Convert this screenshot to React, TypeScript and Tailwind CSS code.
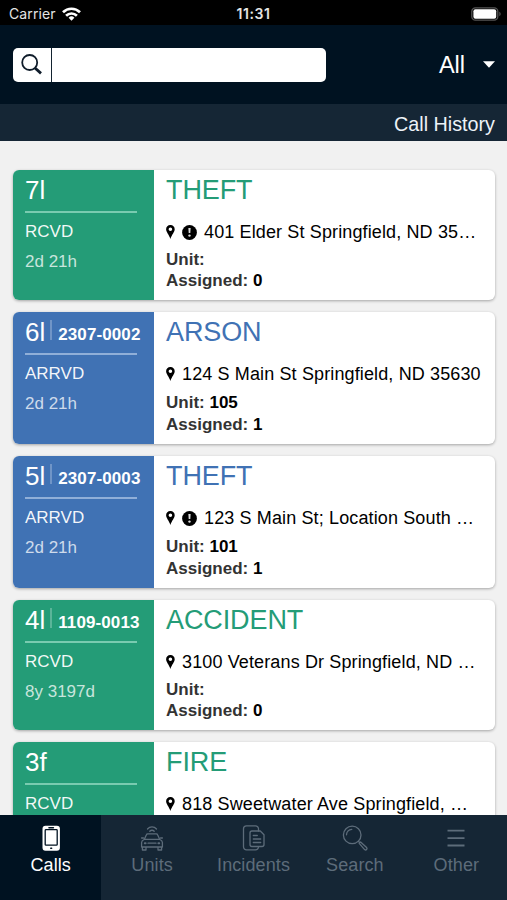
import type { ReactNode } from "react";
import clsx from "clsx";

type Call = {
  id: string;
  caseNo?: string;
  status: string;
  age?: string;
  type: string;
  alert?: boolean;
  address: string;
  unit?: string;
  assigned?: number;
  tone: "green" | "blue";
};

const calls: Call[] = [
  { id: "7l", status: "RCVD", age: "2d 21h", type: "THEFT", alert: true, address: "401 Elder St Springfield, ND 35…", assigned: 0, tone: "green" },
  { id: "6l", caseNo: "2307-0002", status: "ARRVD", age: "2d 21h", type: "ARSON", address: "124 S Main St Springfield, ND 35630", unit: "105", assigned: 1, tone: "blue" },
  { id: "5l", caseNo: "2307-0003", status: "ARRVD", age: "2d 21h", type: "THEFT", alert: true, address: "123 S Main St; Location South …", unit: "101", assigned: 1, tone: "blue" },
  { id: "4l", caseNo: "1109-0013", status: "RCVD", age: "8y 3197d", type: "ACCIDENT", address: "3100 Veterans Dr Springfield, ND …", assigned: 0, tone: "green" },
  { id: "3f", status: "RCVD", type: "FIRE", address: "818 Sweetwater Ave Springfield, …", tone: "green" },
];

function PinIcon() {
  return (
    <svg className="w-[9px] h-3.5 shrink-0" viewBox="0 0 9 14">
      <path fillRule="evenodd" d="M4.4 0A4.2 4.2 0 0 0 .1 4.3C.1 7 2.9 9.4 4.4 14c1.5-4.6 4.3-7 4.3-9.7A4.2 4.2 0 0 0 4.4 0Zm0 2.4a1.8 1.8 0 1 1 0 3.6 1.8 1.8 0 0 1 0-3.6Z" />
    </svg>
  );
}

function AlertIcon() {
  return (
    <svg className="w-[15px] h-[15px] ml-[7px] shrink-0" viewBox="0 0 15 15">
      <circle cx="7.5" cy="7.5" r="7.4" />
      <path d="M6.4 3h2.2l-.3 5H6.7Z" fill="#ddd" />
      <circle cx="7.5" cy="10.6" r="1.2" fill="#ddd" />
    </svg>
  );
}

function CallCard({ call }: { call: Call }) {
  const green = call.tone === "green";
  return (
    <div className={clsx("flex shrink-0 rounded-[6px] overflow-hidden bg-white shadow-[0_1px_3px_rgba(0,0,0,0.32)]", call.unit ? "h-[132px]" : "h-[130px]")}>
      <div className={clsx("w-[141px] shrink-0 pl-3 text-white", green ? "bg-[#249c77]" : "bg-[#4072b4]")}>
        <div className="flex h-[41px] pt-[2px] whitespace-nowrap">
          <span className="text-[26px] leading-9">{call.id}</span>
          {call.caseNo && (
            <>
              <span className="w-[2px] h-5 mt-[6px] ml-[5px] bg-white/25 shrink-0" />
              <span className="ml-[6px] mt-[9px] text-[17px] leading-6 font-bold tracking-[0.1px]">{call.caseNo}</span>
            </>
          )}
        </div>
        <div className={clsx("h-[2px] w-[112px]", green ? "bg-[#79cbb0]" : "bg-[#90afd8]")} />
        <div className="mt-2 text-[17px] leading-[22px] text-white/95">{call.status}</div>
        {call.age && <div className="mt-2 text-[17px] leading-[22px] text-white/75">{call.age}</div>}
      </div>
      <div className="grow min-w-0 pl-3 pt-[2px]">
        <h2 className={clsx("text-[27px] leading-9 tracking-[-0.1px]", green ? "text-[#249c77]" : "text-[#4072b4]")}>{call.type}</h2>
        <div className="mt-3 h-6 flex items-center whitespace-nowrap text-black">
          <PinIcon />
          {call.alert && <AlertIcon />}
          <span className="ml-[7px] text-[18px] leading-6 tracking-[0.13px]">{call.address}</span>
        </div>
        {call.assigned !== undefined && (
          <div className={clsx("text-[17px] font-bold text-[#333]", call.unit ? "mt-[6px] leading-[22px]" : "mt-[5px] leading-[21px]")}>
            <div>
              Unit: <span className="text-black">{call.unit}</span>
            </div>
            <div>
              Assigned: <span className="text-black">{call.assigned}</span>
            </div>
          </div>
        )}
      </div>
    </div>
  );
}

function Tab({ label, active, children }: { label: string; active?: boolean; children: ReactNode }) {
  return (
    <button className={clsx("flex-1 flex flex-col items-center pt-[9px]", active ? "bg-[#001221] text-white" : "text-[#5d6c7a]")}>
      <svg className="w-7 h-7" viewBox="0 0 28 28" fill="none" stroke="currentColor" strokeWidth="1.3" strokeLinecap="round" strokeLinejoin="round">
        {children}
      </svg>
      <span className="mt-px text-[18px] leading-6 tracking-[0.1px]">{label}</span>
    </button>
  );
}

export default function App() {
  return (
    <div className="w-[507px] h-[900px] flex flex-col overflow-hidden bg-[#f1f1f1] font-['Liberation_Sans',Arial,sans-serif]">
      {/* Status bar */}
      <div className="h-[25px] shrink-0 grid grid-cols-3 items-center bg-black text-[#e4e4e4] font-['Inter',sans-serif] text-[14px] pt-[2px]">
        <div className="flex items-center gap-[6px] pl-[9px]">
          <span className="tracking-[0.1px]">Carrier</span>
          <svg className="w-[19px] h-[14px]" viewBox="0 0 19 14" fill="none" stroke="#fff" strokeWidth="2.7">
            <path d="M1 5.2a12.2 12.2 0 0 1 17 0M4.1 8.7a7.7 7.7 0 0 1 10.8 0" />
            <path d="M9.5 13.7 6.6 10.8a4.1 4.1 0 0 1 5.8 0Z" fill="#fff" stroke="none" />
          </svg>
        </div>
        <span className="text-center font-semibold tracking-[0.6px]">11:31</span>
        <svg className="w-[30px] h-[14px] justify-self-end mr-[6px]" viewBox="0 0 30 14">
          <rect x="0.8" y="0.8" width="26" height="12.4" rx="3.6" fill="none" stroke="#555" strokeWidth="1.3" />
          <rect x="2.4" y="2.3" width="22.8" height="9.4" rx="2" fill="#fff" />
          <path d="M28.3 4.8c1.8.7 1.8 3.7 0 4.4Z" fill="#555" />
        </svg>
      </div>

      {/* Search header */}
      <div className="h-[79px] shrink-0 flex items-center justify-between pl-[13px] pr-3 bg-[#001221]">
        <div className="flex w-[313px] h-[34px] rounded-[5px] overflow-hidden bg-white">
          <div className="w-[39px] pr-[2px] border-r border-[#132330] flex items-center justify-center">
            <svg className="w-[21px] h-[21px]" viewBox="0 0 21 21" fill="none" stroke="#101d2b">
              <circle cx="8.7" cy="8.5" r="7.5" strokeWidth="1.8" />
              <path d="M14 14l6 5.4" strokeWidth="2.8" />
            </svg>
          </div>
        </div>
        <div className="flex items-center text-white">
          <span className="text-[23.5px] leading-7">All</span>
          <svg className="ml-[18px] w-3 h-[7px]" viewBox="0 0 12 7" fill="currentColor">
            <path d="M0 .3h12L6 6.7Z" />
          </svg>
        </div>
      </div>
      <div className="h-[37px] shrink-0 bg-[#152635] text-[#edf3f8] text-right pr-3 text-[19.75px] leading-[40px]">Call History</div>

      {/* Call list */}
      <div className="grow min-h-0 overflow-hidden flex flex-col gap-3 pl-[13px] pr-3 pt-[29px]">
        {calls.map((call) => (
          <CallCard key={call.id} call={call} />
        ))}
      </div>

      {/* Tab bar */}
      <nav className="h-[85px] shrink-0 flex bg-[#152635]">
        <Tab label="Calls" active>
          <rect x="5.5" y="1.8" width="17.4" height="25" rx="3" fill="#fff" stroke="none" />
          <rect x="8.2" y="5.6" width="12" height="15.6" rx="0.8" stroke="#001221" />
          <path d="M12 3.7h4.4M13.8 24.3h.8" stroke="#001221" strokeWidth="1.6" />
        </Tab>
        <Tab label="Units">
          <path d="M9.5 5a6 6 0 0 1 9 0M11.8 7.2a3 3 0 0 1 4.4 0" />
          <path d="M6.2 15.5l2.1-4.6q.4-1 1.4-1h8.6q1 0 1.4 1l2.1 4.6Q24.4 16.6 24.4 18.5V23H3.6v-4.5q0-1.9 2.6-3ZM6.5 15.3h15M4.4 23v3h3.6v-3M20 23v3h3.6v-3M3.6 14h1.8M22.6 14h1.8M10 19.2h8" />
          <path d="M6.8 19.3h.8M20.4 19.3h.8" strokeWidth="2" />
        </Tab>
        <Tab label="Incidents">
          <path d="M18.5 7V4.8a3 3 0 0 0-3-3h-9a3 3 0 0 0-3 3v18a3 3 0 0 0 3 3h9a3 3 0 0 0 3-3" />
          <path d="M12 7h8.3l3.7 3.7v9.8a2 2 0 0 1-2 2H12a2 2 0 0 1-2-2V9a2 2 0 0 1 2-2ZM13.3 11.5h4M13.3 15h7.4M13.3 18.5h7.4" />
        </Tab>
        <Tab label="Search">
          <circle cx="11.2" cy="10.9" r="8.8" />
          <path d="M5.5 10.8a5.7 5.7 0 0 1 5.3-5.5M17.3 17.3l1.4 1.3" />
          <path d="M18.2 19.3l1.4-1.4 6 5.6q.9 1 0 2t-2 .1Z" />
        </Tab>
        <Tab label="Other">
          <path d="M5.5 6.7h17M5.5 14.1h17M5.5 21.5h17" strokeLinecap="butt" strokeWidth="1.8" />
        </Tab>
      </nav>
    </div>
  );
}
